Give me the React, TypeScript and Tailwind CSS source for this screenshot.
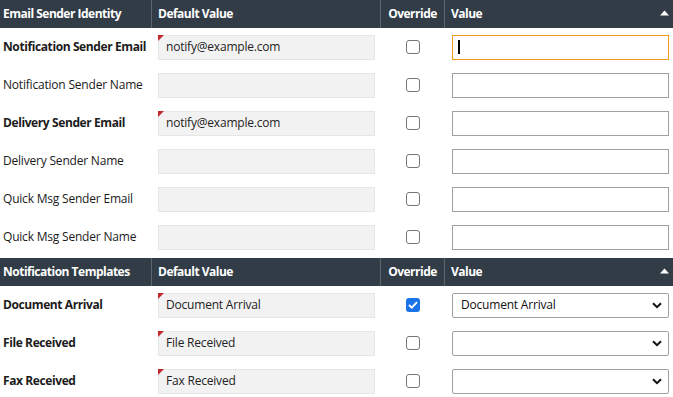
const senderRows = [
  { label: "Notification Sender Email", bold: true, def: "notify@example.com", focus: true },
  { label: "Notification Sender Name", bold: false, def: "" },
  { label: "Delivery Sender Email", bold: true, def: "notify@example.com" },
  { label: "Delivery Sender Name", bold: false, def: "" },
  { label: "Quick Msg Sender Email", bold: false, def: "" },
  { label: "Quick Msg Sender Name", bold: false, def: "" },
];

const templateRows = [
  { label: "Document Arrival", def: "Document Arrival", value: "Document Arrival", checked: true },
  { label: "File Received", def: "File Received", value: "", checked: false },
  { label: "Fax Received", def: "Fax Received", value: "", checked: false },
];

function HeaderRow({ title }: { title: string }) {
  return (
    <div className="flex h-[28px] items-center whitespace-nowrap bg-[#313c46] text-[12px] font-bold tracking-[-0.5px] text-white">
      <div className="flex h-full w-[152px] items-center border-r border-[#5b656d] pl-[3px]">{title}</div>
      <div className="flex h-full w-[229px] items-center border-r border-[#5b656d] pl-[6px]">Default Value</div>
      <div className="flex h-full w-[64px] items-center justify-center border-r border-[#5b656d]">Override</div>
      <div className="flex h-full flex-1 items-center justify-between pl-[6px] pr-[4px]">
        <span>Value</span>
        <svg width="9" height="6" viewBox="0 0 9 6" className="mb-[2px]">
          <path d="M0 5.5 L4.5 0.5 L9 5.5 Z" fill="#ffffff" />
        </svg>
      </div>
    </div>
  );
}

function DefaultBox({ text }: { text: string }) {
  return (
    <div className="relative flex h-[25px] w-[217px] items-center border border-[#e6e6e6] bg-[#f2f2f2] pl-[7px] text-[#222]">
      {text && (
        <div className="absolute left-[-1px] top-[-1px] h-0 w-0 border-r-[6px] border-t-[6px] border-r-transparent border-t-[#c0282d]" />
      )}
      {text}
    </div>
  );
}

function Check({ checked }: { checked: boolean }) {
  return checked ? (
    <div className="flex h-[14px] w-[14px] items-center justify-center rounded-[3px] bg-[#1a73e8]">
      <svg width="10" height="8" viewBox="0 0 10 8">
        <path d="M1 4 L3.8 6.6 L9 1.2" fill="none" stroke="#fff" strokeWidth="1.9" />
      </svg>
    </div>
  ) : (
    <div className="h-[14px] w-[14px] rounded-[3px] border border-[#767676] bg-white" />
  );
}

export default function App() {
  return (
    <div className="h-[397px] w-[673px] overflow-hidden whitespace-nowrap bg-white text-[12px] tracking-[-0.2px] text-[#1b1b1b] [font-family:'Open_Sans',sans-serif]">
      <HeaderRow title="Email Sender Identity" />
      {senderRows.map((r) => (
        <div key={r.label} className="flex h-[38px] items-center">
          <div className={`w-[152px] pl-[3px] ${r.bold ? "font-bold tracking-[-0.4px]" : ""}`}>{r.label}</div>
          <div className="w-[229px] pl-[6px]">
            <DefaultBox text={r.def} />
          </div>
          <div className="flex w-[64px] justify-center">
            <Check checked={false} />
          </div>
          <div className="flex-1 pl-[7px]">
            {r.focus ? (
              <div className="flex h-[25px] w-[217px] items-center border border-[#f29a1f] bg-white pl-[5px]">
                <div className="h-[14px] w-[2px] bg-black" />
              </div>
            ) : (
              <div className="h-[25px] w-[217px] border border-[#a0a0a0] bg-white" />
            )}
          </div>
        </div>
      ))}
      <div className="h-[2px]" />
      <HeaderRow title="Notification Templates" />
      {templateRows.map((r) => (
        <div key={r.label} className="flex h-[38px] items-center">
          <div className="w-[152px] pl-[3px] font-bold tracking-[-0.4px]">{r.label}</div>
          <div className="w-[229px] pl-[6px]">
            <DefaultBox text={r.def} />
          </div>
          <div className="flex w-[64px] justify-center">
            <Check checked={r.checked} />
          </div>
          <div className="flex-1 pl-[7px]">
            <div className="flex h-[25px] w-[217px] items-center justify-between rounded-[2px] border border-[#a0a0a0] bg-white pl-[8px] pr-[6px] text-[#111]">
              <span>{r.value}</span>
              <svg width="10" height="7" viewBox="0 0 10 7">
                <path d="M1 1.2 L5 5.2 L9 1.2" fill="none" stroke="#111" strokeWidth="2" />
              </svg>
            </div>
          </div>
        </div>
      ))}
    </div>
  );
}
